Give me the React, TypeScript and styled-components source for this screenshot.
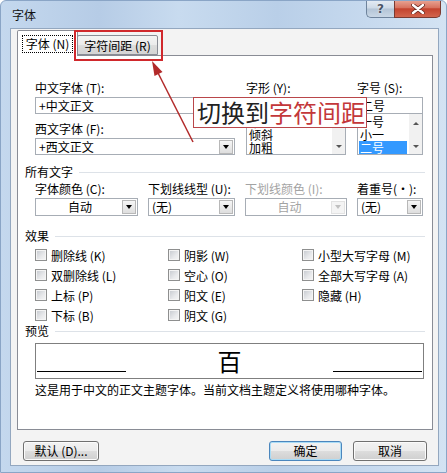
import React from "react";
import styled, { createGlobalStyle } from "styled-components";

const GlobalStyle = createGlobalStyle`
  html, body {
    margin: 0;
    padding: 0;
    background: #ffffff;
  }
  body {
    font-family: "Noto Sans CJK SC", "Noto Sans", sans-serif;
    font-size: 12px;
    color: #000;
  }
  * {
    box-sizing: border-box;
  }
`;

const Window = styled.div`
  width: 447px;
  height: 473px;
  display: flex;
  flex-direction: column;
  padding: 0 7px 6px 9px;
  border: 1px solid #8aa5c6;
  border-radius: 6px 6px 0 0;
  background: linear-gradient(
    90deg,
    #c4d8ee 0%,
    #b6cce6 22%,
    #c8dbef 40%,
    #b9cfe8 62%,
    #c6d9ee 82%,
    #d3e3f3 100%
  );
  overflow: hidden;
`;

const TitleBar = styled.div`
  height: 27px;
  flex: none;
  display: flex;
  justify-content: space-between;
  align-items: flex-start;
`;

const Title = styled.div`
  padding: 7px 0 0 2px;
  line-height: 14px;
  font-size: 12px;
  color: #111;
`;

const Controls = styled.div`
  display: flex;
  margin-top: -1px;
  margin-right: -2px;
`;

const HelpButton = styled.div`
  width: 28px;
  height: 18px;
  display: flex;
  align-items: center;
  justify-content: center;
  border: 1px solid #6e839c;
  border-top: none;
  border-right: none;
  border-radius: 0 0 0 5px;
  background: linear-gradient(#e6edf5 0%, #cdd9e6 48%, #b3c4d6 52%, #c9d7e6 100%);
  color: #4a5566;
  font-family: "DejaVu Sans", sans-serif;
  font-size: 12px;
  font-weight: bold;
  text-shadow: 0 0 2px #fff;
`;

const CloseButton = styled.div`
  width: 47px;
  height: 18px;
  display: flex;
  align-items: center;
  justify-content: center;
  border: 1px solid #7a3a31;
  border-top: none;
  border-radius: 0 0 5px 0;
  background: linear-gradient(#e9a797 0%, #d8735f 45%, #c3432e 52%, #d2654d 100%);
`;

const Client = styled.div`
  position: relative;
  flex: 1;
  display: flex;
  flex-direction: column;
  padding: 0 5px 4px 6px;
  background: #f3f3f3;
  border: 1px solid #93a7bf;
`;

const TabStrip = styled.div`
  height: 26px;
  flex: none;
  display: flex;
  align-items: flex-end;
`;

const Tab = styled.div<{ $active?: boolean }>`
  position: relative;
  z-index: ${(p) => (p.$active ? 2 : 0)};
  height: ${(p) => (p.$active ? "26px" : "20px")};
  width: ${(p) => (p.$active ? "61px" : "81px")};
  margin-left: ${(p) => (p.$active ? "0" : "-1px")};
  margin-bottom: ${(p) => (p.$active ? "-1px" : "0")};
  display: flex;
  align-items: center;
  justify-content: center;
  border: 1px solid #898c95;
  border-bottom: ${(p) => (p.$active ? "none" : "1px solid #898c95")};
  border-radius: 2px 2px 0 0;
  background: ${(p) =>
    p.$active
      ? "#ffffff"
      : "linear-gradient(#f3f3f3 0%, #ebebeb 50%, #dddddd 51%, #d4d4d4 100%)"};
  white-space: nowrap;
`;

const FocusText = styled.span`
  padding: 0 2px;
  line-height: 14px;
  outline: 1px dotted #000;
  outline-offset: 1px;
`;

const Panel = styled.div`
  position: relative;
  z-index: 1;
  height: 375px;
  flex: none;
  padding: 25px 7px 0 7px;
  background: #ffffff;
  border: 1px solid #898c95;
`;

const Indent = styled.div`
  margin-left: 10px;
`;

const FontGrid = styled(Indent)`
  display: grid;
  grid-template-columns: 200px 100px 66px;
  column-gap: 11px;
`;

const Column = styled.div`
  display: flex;
  flex-direction: column;
`;

const FieldLabel = styled.div<{ $disabled?: boolean; $top?: number }>`
  height: 14px;
  line-height: 14px;
  margin-top: ${(p) => p.$top ?? 0}px;
  margin-bottom: 2px;
  white-space: nowrap;
  color: ${(p) => (p.$disabled ? "#a3a3a3" : "#000")};
`;

const Field = styled.div<{ $height?: number; $center?: boolean; $disabled?: boolean }>`
  height: ${(p) => p.$height ?? 17}px;
  display: flex;
  align-items: center;
  padding-left: 2px;
  background: #ffffff;
  border: 1px solid #a7adb5;
  color: ${(p) => (p.$disabled ? "#a3a3a3" : "#000")};
  white-space: nowrap;
`;

const FieldText = styled.span<{ $center?: boolean }>`
  flex: 1;
  line-height: 14px;
  text-align: ${(p) => (p.$center ? "center" : "left")};
  padding-left: ${(p) => (p.$center ? "0" : "1px")};
`;

const ArrowButton = styled.span<{ $disabled?: boolean }>`
  width: 14px;
  height: ${(p) => (p.$disabled ? "13px" : "14px")};
  margin-right: 1px;
  display: flex;
  align-items: center;
  justify-content: center;
  border: 1px solid ${(p) => (p.$disabled ? "#e2e2e2" : "#b8b8b8")};
  background: ${(p) =>
    p.$disabled ? "#f4f4f4" : "linear-gradient(#f6f6f6, #dedede)"};

  &::after {
    content: "";
    border-left: 3px solid transparent;
    border-right: 3px solid transparent;
    border-top: 4px solid ${(p) => (p.$disabled ? "#c0c0c0" : "#000")};
  }
`;

const ListBox = styled.div`
  height: 42px;
  margin-top: -1px;
  display: flex;
  background: #ffffff;
  border: 1px solid #a7adb5;
  overflow: hidden;
`;

const ListItems = styled.div`
  flex: 1;
  padding: 1px 2px 0 1px;
`;

const ListItem = styled.div<{ $selected?: boolean }>`
  height: 13px;
  line-height: 13px;
  padding-left: 1px;
  white-space: nowrap;
  background: ${(p) => (p.$selected ? "#3399ff" : "transparent")};
  color: ${(p) => (p.$selected ? "#ffffff" : "#000")};
`;

const ScrollTrack = styled.div`
  width: 13px;
  display: flex;
  flex-direction: column;
  justify-content: space-between;
  align-items: center;
  padding: 8px 0 6px;
  background: #f1f1f1;
`;

const ScrollArrow = styled.span<{ $up?: boolean; $hidden?: boolean }>`
  visibility: ${(p) => (p.$hidden ? "hidden" : "visible")};
  border-left: 3px solid transparent;
  border-right: 3px solid transparent;
  ${(p) => (p.$up ? "border-bottom: 3px solid #555;" : "border-top: 3px solid #555;")}
`;

const SectionHeader = styled.div<{ $top: number }>`
  display: flex;
  align-items: center;
  height: 14px;
  line-height: 14px;
  margin-top: ${(p) => p.$top}px;

  &::after {
    content: "";
    flex: 1;
    height: 1px;
    margin-left: 6px;
    background: #dde2e8;
  }
`;

const AttrGrid = styled(Indent)`
  display: grid;
  grid-template-columns: 103px 87px 102px 66px;
  column-gap: 10px;
  margin-top: 3px;
`;

const AttrCell = styled.div`
  display: flex;
  flex-direction: column;
`;

const EffectsGrid = styled(Indent)`
  display: grid;
  grid-template-columns: 133px 134px 1fr;
  grid-template-rows: repeat(4, 20px);
  grid-auto-flow: column;
  margin-top: 2px;
`;

const CheckRow = styled.label`
  display: flex;
  align-items: center;
  gap: 4px;
  white-space: nowrap;
`;

const CheckBox = styled.span`
  width: 12px;
  height: 12px;
  border: 1px solid #8e8f8f;
  background: linear-gradient(135deg, #c4c8ce 0%, #e8e9eb 60%, #f6f6f6 100%);
  box-shadow: inset 0 0 0 1px #f4f4f4;
`;

const PreviewBox = styled(Indent)`
  height: 36px;
  width: 389px;
  margin-top: 5px;
  display: flex;
  align-items: flex-end;
  padding: 0 1px 6px;
  border: 1px solid #7f7f7f;
`;

const BaseLine = styled.span`
  width: 89px;
  height: 1px;
  background: #000;
`;

const PreviewChar = styled.span`
  flex: 1;
  align-self: center;
  text-align: center;
  font-size: 24px;
  line-height: 28px;
  margin-top: 6px;
`;

const Description = styled(Indent)`
  margin-top: 4px;
  line-height: 14px;
  white-space: nowrap;
`;

const ButtonRow = styled.div`
  flex: none;
  display: flex;
  justify-content: space-between;
  margin-top: 11px;
  padding-left: 6px;
  padding-right: 6px;
`;

const ButtonGroup = styled.div`
  display: flex;
  gap: 11px;
`;

const DialogButton = styled.button<{ $w: number; $primary?: boolean }>`
  width: ${(p) => p.$w}px;
  height: 20px;
  padding: 0;
  font-family: inherit;
  font-size: 12px;
  line-height: 14px;
  color: #000;
  border-radius: 3px;
  border: 1px solid ${(p) => (p.$primary ? "#4b86bd" : "#707070")};
  background: linear-gradient(#f2f2f2 0%, #ebebeb 50%, #dddddd 51%, #cfcfcf 100%);
  box-shadow: inset 0 0 0 1px ${(p) => (p.$primary ? "#a9dcf6" : "#fbfbfb")};
`;

const RedFrame = styled.div`
  position: absolute;
  left: 63px;
  top: 1px;
  width: 89px;
  height: 31px;
  border: 2px solid #d0282c;
  z-index: 5;
  pointer-events: none;
`;

const Callout = styled.div`
  position: absolute;
  left: 182px;
  top: 68px;
  width: 174px;
  height: 31px;
  padding-left: 3px;
  z-index: 5;
  background: #ffffff;
  border: 1px solid #b9464a;
  font-size: 24px;
  line-height: 28px;
  color: #222;
  white-space: nowrap;
`;

const CalloutAccent = styled.span`
  color: #c3373a;
`;

const ArrowSvg = styled.svg`
  position: absolute;
  left: 129px;
  top: 26px;
  z-index: 5;
`;

type Combo = { label: string; value: string; center?: boolean; disabled?: boolean; width?: number };

const attrs: Combo[] = [
  { label: "字体颜色 (C):", value: "自动", center: true },
  { label: "下划线线型 (U):", value: "(无)" },
  { label: "下划线颜色 (I):", value: "自动", center: true, disabled: true },
  { label: "着重号(·):", value: "(无)" },
];

const effects = [
  "删除线 (K)",
  "双删除线 (L)",
  "上标 (P)",
  "下标 (B)",
  "阴影 (W)",
  "空心 (O)",
  "阳文 (E)",
  "阴文 (G)",
  "小型大写字母 (M)",
  "全部大写字母 (A)",
  "隐藏 (H)",
];

const ComboField = ({ value, center, disabled, height }: { value: string; center?: boolean; disabled?: boolean; height?: number }) => (
  <Field $height={height} $disabled={disabled}>
    <FieldText $center={center}>{value}</FieldText>
    <ArrowButton $disabled={disabled} />
  </Field>
);

const App = () => {
  return (
    <>
      <GlobalStyle />
      <Window>
        <TitleBar>
          <Title>字体</Title>
          <Controls>
            <HelpButton>?</HelpButton>
            <CloseButton>
              <svg width="14" height="10" viewBox="0 0 14 10">
                <path d="M2 1 L12 9 M12 1 L2 9" stroke="#6b2a22" strokeWidth="4" strokeLinecap="round" />
                <path d="M2 1 L12 9 M12 1 L2 9" stroke="#ffffff" strokeWidth="2.4" strokeLinecap="round" />
              </svg>
            </CloseButton>
          </Controls>
        </TitleBar>

        <Client>
          <TabStrip>
            <Tab $active>
              <FocusText>字体 (N)</FocusText>
            </Tab>
            <Tab>字符间距 (R)</Tab>
          </TabStrip>

          <Panel>
            <FontGrid>
              <Column>
                <FieldLabel>中文字体 (T):</FieldLabel>
                <ComboField value="+中文正文" />
                <FieldLabel $top={8}>西文字体 (F):</FieldLabel>
                <ComboField value="+西文正文" />
              </Column>
              <Column>
                <FieldLabel>字形 (Y):</FieldLabel>
                <Field>
                  <FieldText>常规</FieldText>
                </Field>
                <ListBox>
                  <ListItems>
                    <ListItem>常规</ListItem>
                    <ListItem>倾斜</ListItem>
                    <ListItem>加粗</ListItem>
                  </ListItems>
                  <ScrollTrack>
                    <ScrollArrow $up $hidden />
                    <ScrollArrow />
                  </ScrollTrack>
                </ListBox>
              </Column>
              <Column>
                <FieldLabel>字号 (S):</FieldLabel>
                <Field>
                  <FieldText>二号</FieldText>
                </Field>
                <ListBox>
                  <ListItems>
                    <ListItem>一号</ListItem>
                    <ListItem>小一</ListItem>
                    <ListItem $selected>二号</ListItem>
                  </ListItems>
                  <ScrollTrack>
                    <ScrollArrow $up />
                    <ScrollArrow />
                  </ScrollTrack>
                </ListBox>
              </Column>
            </FontGrid>

            <SectionHeader $top={10}>所有文字</SectionHeader>
            <AttrGrid>
              {attrs.map((a) => (
                <AttrCell key={a.label}>
                  <FieldLabel $disabled={a.disabled}>{a.label}</FieldLabel>
                  <ComboField value={a.value} center={a.center} disabled={a.disabled} height={18} />
                </AttrCell>
              ))}
            </AttrGrid>

            <SectionHeader $top={13}>效果</SectionHeader>
            <EffectsGrid>
              {effects.map((e) => (
                <CheckRow key={e}>
                  <CheckBox />
                  {e}
                </CheckRow>
              ))}
            </EffectsGrid>

            <SectionHeader $top={-1}>预览</SectionHeader>
            <PreviewBox>
              <BaseLine />
              <PreviewChar>百</PreviewChar>
              <BaseLine />
            </PreviewBox>
            <Description>这是用于中文的正文主题字体。当前文档主题定义将使用哪种字体。</Description>
          </Panel>

          <ButtonRow>
            <DialogButton $w={76}>默认 (D)...</DialogButton>
            <ButtonGroup>
              <DialogButton $w={73} $primary>
                确定
              </DialogButton>
              <DialogButton $w={74}>取消</DialogButton>
            </ButtonGroup>
          </ButtonRow>

          <RedFrame />
          <Callout>
            切换到<CalloutAccent>字符间距</CalloutAccent>
          </Callout>
          <ArrowSvg width="60" height="95" viewBox="0 0 60 95">
            <line x1="53" y1="87" x2="15" y2="12" stroke="#b22a2a" strokeWidth="1.5" />
            <polygon points="12,6 22.5,17 14.5,21" fill="#b22a2a" />
          </ArrowSvg>
        </Client>
      </Window>
    </>
  );
};

export default App;
